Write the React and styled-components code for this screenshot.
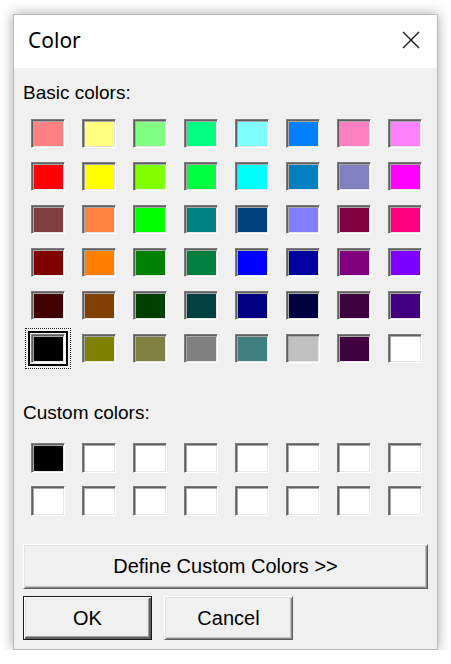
import styled, { createGlobalStyle, css } from "styled-components";

const GlobalStyle = createGlobalStyle`
  html, body {
    margin: 0;
    padding: 0;
    background: #ffffff;
  }
  body {
    font-family: "Liberation Sans", Arial, sans-serif;
  }
`;

const basicColors = [
  "#FF8080", "#FFFF80", "#80FF80", "#00FF80", "#80FFFF", "#0080FF", "#FF80C0", "#FF80FF",
  "#FF0000", "#FFFF00", "#80FF00", "#00FF40", "#00FFFF", "#0080C0", "#8080C0", "#FF00FF",
  "#804040", "#FF8040", "#00FF00", "#008080", "#004080", "#8080FF", "#800040", "#FF0080",
  "#800000", "#FF8000", "#008000", "#008040", "#0000FF", "#0000A0", "#800080", "#8000FF",
  "#400000", "#804000", "#004000", "#004040", "#000080", "#000040", "#400040", "#400080",
  "#000000", "#808000", "#808040", "#808080", "#408080", "#C0C0C0", "#400040", "#FFFFFF",
];

const customColors = ["#000000", ...Array(15).fill("#FFFFFF")];

const Page = styled.div`
  padding: 14px 0 0 13px;
`;

const Window = styled.div`
  width: 425px;
  height: 636px;
  box-sizing: border-box;
  background: #f0f0f0;
  border: 1px solid #b9b9b9;
  box-shadow: 0 0 12px rgba(0, 0, 0, 0.35);
  display: flex;
  flex-direction: column;
`;

const TitleBar = styled.div`
  height: 54px;
  background: #ffffff;
  display: flex;
  align-items: center;
  justify-content: space-between;
  padding: 0 14px 4px 14px;
  box-sizing: border-box;
`;

const Title = styled.span`
  font-family: "Segoe UI", "Noto Sans", sans-serif;
  font-size: 21px;
  color: #000;
`;

const CloseIcon = styled.svg`
  width: 20px;
  height: 20px;
  margin-right: 2px;
`;

const Body = styled.div`
  display: flex;
  flex-direction: column;
  padding: 15px 9px 9px 9px;
`;

const Label = styled.div`
  font-size: 19px;
  line-height: 20px;
  color: #000;
  margin-top: ${(p) => p.$top || 0}px;
`;

const Grid = styled.div`
  display: grid;
  grid-template-columns: repeat(8, 34px);
  column-gap: 17px;
  row-gap: ${(p) => p.$rowGap}px;
  margin: ${(p) => p.$top}px 0 0 8px;
`;

const Swatch = styled.div`
  position: relative;
  height: ${(p) => p.$h}px;
  box-sizing: border-box;
  background: ${(p) => p.$color};
  border-style: solid;
  border-width: 1px;
  border-color: #7c7c7c #ffffff #ffffff #7c7c7c;
  box-shadow: inset 1px 1px 0 #5f5f5f, inset 2px 2px 0 #a8a8a8,
    inset -1px -1px 0 #e8e8e8;

  ${(p) =>
    p.$selected &&
    css`
      &::before {
        content: "";
        position: absolute;
        inset: -4px;
        border: 2px solid #000;
      }
      &::after {
        content: "";
        position: absolute;
        inset: -7px;
        border: 1px dotted #222;
      }
    `}
`;

const Button = styled.button`
  font-family: "Liberation Sans", Arial, sans-serif;
  font-size: ${(p) => p.$size || 20}px;
  color: #000;
  background: #f0f0f0;
  height: ${(p) => p.$h}px;
  width: ${(p) => (p.$w ? `${p.$w}px` : "100%")};
  padding: 0;
  box-sizing: border-box;
  border-style: solid;
  border-width: 1px;
  border-color: #ffffff #5f5f5f #5f5f5f #ffffff;
  box-shadow: inset 1px 1px 0 #e3e3e3, inset -1px -1px 0 #8a8a8a,
    inset -2px -2px 0 #c4c4c4;
  margin-top: ${(p) => p.$top || 0}px;

  ${(p) =>
    p.$default &&
    css`
      border: 1px solid #1a1a1a;
      box-shadow: inset 1px 1px 0 #fff, inset -2px -2px 0 #5f5f5f,
        inset 2px 2px 0 #e3e3e3, inset -3px -3px 0 #a0a0a0;
    `}
`;

const ButtonRow = styled.div`
  display: flex;
  gap: 12px;
  margin-top: 7px;
`;

const App = () => {
  return (
    <>
      <GlobalStyle />
      <Page>
        <Window>
          <TitleBar>
            <Title>Color</Title>
            <CloseIcon viewBox="0 0 20 20">
              <path d="M2 2 L18 18 M18 2 L2 18" stroke="#1a1a1a" strokeWidth="1.4" fill="none" />
            </CloseIcon>
          </TitleBar>
          <Body>
            <Label>Basic colors:</Label>
            <Grid $top={16} $rowGap={14}>
              {basicColors.map((c, i) => (
                <Swatch key={i} $color={c} $h={29} $selected={i === 40} />
              ))}
            </Grid>
            <Label $top={40}>Custom colors:</Label>
            <Grid $top={20} $rowGap={13}>
              {customColors.map((c, i) => (
                <Swatch key={i} $color={c} $h={30} />
              ))}
            </Grid>
            <Button $h={45} $top={28}>Define Custom Colors &gt;&gt;</Button>
            <ButtonRow>
              <Button $h={44} $w={129} $default>OK</Button>
              <Button $h={44} $w={129}>Cancel</Button>
            </ButtonRow>
          </Body>
        </Window>
      </Page>
    </>
  );
};

export default App;
